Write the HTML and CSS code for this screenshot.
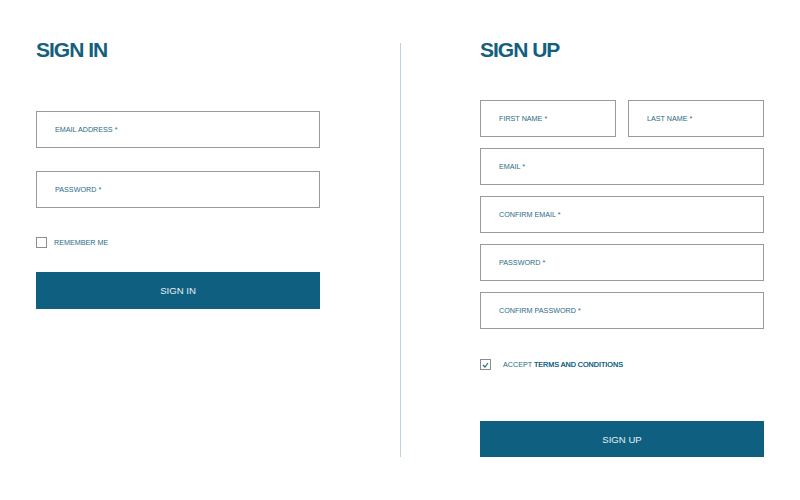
FILE: index.html
```html
<!DOCTYPE html>
<html lang="en">
<head>
    <meta charset="UTF-8">
    <meta name="viewport" content="width=device-width, initial-scale=1.0">
    <title>Sign In / Sign Up</title>
    <link rel="stylesheet" href="styles.css">
</head>
<body>
    <div class="page">
        <!-- Sign in column -->
        <section class="panel signin">
            <h1>SIGN IN</h1>
            <form class="fields">
                <div class="field"><span>EMAIL ADDRESS *</span></div>
                <div class="field"><span>PASSWORD *</span></div>
            </form>
            <label class="check">
                <span class="box"></span>
                <span>REMEMBER ME</span>
            </label>
            <button class="btn">SIGN IN</button>
        </section>

        <div class="divider"></div>

        <!-- Sign up column -->
        <section class="panel signup">
            <h1>SIGN UP</h1>
            <form class="fields">
                <div class="row">
                    <div class="field"><span>FIRST NAME *</span></div>
                    <div class="field"><span>LAST NAME *</span></div>
                </div>
                <div class="field"><span>EMAIL *</span></div>
                <div class="field"><span>CONFIRM EMAIL *</span></div>
                <div class="field"><span>PASSWORD *</span></div>
                <div class="field"><span>CONFIRM PASSWORD *</span></div>
            </form>
            <label class="check">
                <span class="box checked">
                    <svg width="7" height="6" viewBox="0 0 7 6"><polyline points="1,3 3,5 6,1" fill="none" stroke="#2a6a85" stroke-width="1.2"/></svg>
                </span>
                <span>ACCEPT <b>TERMS AND CONDITIONS</b></span>
            </label>
            <button class="btn">SIGN UP</button>
        </section>
    </div>
</body>
</html>
```

FILE: styles.css
```css
body {
    margin: 0;
    background: #fff;
    font-family: "Liberation Sans", Arial, sans-serif;
}
.page {
    display: flex;
    width: 800px;
    height: 500px;
    padding: 38px 36px 0;
    box-sizing: border-box;
}
.panel {
    width: 284px;
    display: flex;
    flex-direction: column;
}
h1 {
    margin: 0;
    height: 24px;
    line-height: 24px;
    font-size: 21px;
    font-weight: bold;
    letter-spacing: -1px;
    color: #135f80;
}
.divider {
    width: 1px;
    height: 414px;
    margin: 5px 79px 0 80px;
    background: #bcd3e0;
}
.fields {
    display: flex;
    flex-direction: column;
}
.signin .fields {
    margin-top: 49px;
    gap: 23px;
}
.signup .fields {
    margin-top: 38px;
    gap: 11px;
}
.row {
    display: flex;
    gap: 12px;
}
.row .field {
    flex: 1;
}
.field {
    height: 37px;
    border: 1px solid #9a9a9a;
    box-sizing: border-box;
    display: flex;
    align-items: center;
    padding-left: 18px;
    font-size: 7.2px;
    color: #2a6a85;
}
.check {
    display: flex;
    align-items: center;
    gap: 7px;
    height: 11px;
    font-size: 7.2px;
    color: #2a6a85;
}
.check b {
    font-weight: normal;
    color: #135f80;
    text-shadow: 0 0 0.3px #135f80;
}
.signin .check {
    margin-top: 29px;
}
.signup .check {
    margin-top: 30px;
    gap: 12px;
}
.box {
    width: 11px;
    height: 11px;
    border: 1px solid #8c8c8c;
    box-sizing: border-box;
    display: flex;
    align-items: center;
    justify-content: center;
}
.btn {
    height: 37px;
    border: none;
    background: #0f5f80;
    color: #e8f0f4;
    font-family: "Liberation Sans", Arial, sans-serif;
    font-size: 9.6px;
    padding: 0;
}
.signin .btn {
    margin-top: 24px;
}
.signup .btn {
    margin-top: 51px;
    height: 36px;
}
```
